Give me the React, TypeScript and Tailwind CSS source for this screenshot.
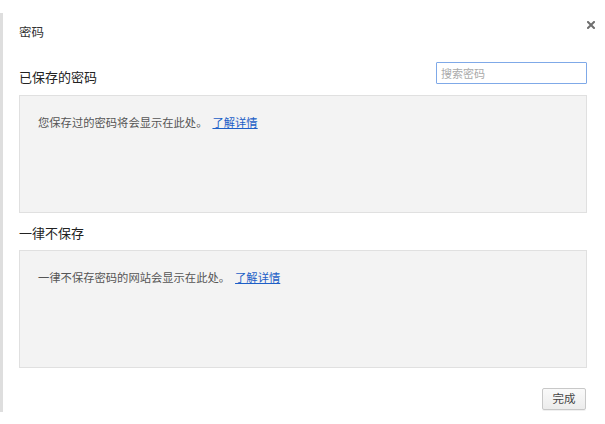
const cjk = "font-['Microsoft_YaHei','Noto_Sans_CJK_SC',sans-serif]";

function Panel({ text }: { text: string }) {
  return (
    <div className="h-[118px] border border-[#e0e0e0] bg-[#f3f3f3] px-[18px] pt-[18px]">
      <p className="text-[11.3px] leading-[16px] text-[#555]">
        {text}
        <a href="#" className="ml-[5px] text-[#1d5fc7] underline">
          了解详情
        </a>
      </p>
    </div>
  );
}

export default function App() {
  return (
    <div className={`relative flex h-[424px] w-[605px] bg-white ${cjk}`}>
      <div className="mt-[13px] h-[399px] w-[3px] bg-[#dedede]" />
      <div className="ml-[16px] mr-[18px] flex flex-1 flex-col">
        <h1 className="mt-[24px] text-[12.5px] leading-[16px] text-[#333]">密码</h1>

        <div className="mt-[22px] flex items-start justify-between">
          <h2 className="mt-[7px] text-[13px] leading-[16px] text-[#222]">已保存的密码</h2>
          <input
            placeholder="搜索密码"
            className="h-[22px] w-[151px] rounded-[1px] border border-[#7fa9e8] bg-white px-[4px] text-[11px] text-[#333] placeholder-[#aaa] outline-none"
          />
        </div>

        <div className="mt-[10px]">
          <Panel text="您保存过的密码将会显示在此处。" />
        </div>

        <h2 className="mt-[12px] text-[13px] leading-[16px] text-[#222]">一律不保存</h2>

        <div className="mt-[9px]">
          <Panel text="一律不保存密码的网站会显示在此处。" />
        </div>

        <div className="mt-[20px] flex justify-end">
          <button className="mr-[1px] h-[22px] w-[44px] rounded-[2px] border border-[#c8c8c8] bg-gradient-to-b from-[#fafafa] to-[#ececec] text-[11.5px] text-[#444] shadow-[0_1px_0_rgba(0,0,0,0.06)]">
            完成
          </button>
        </div>
      </div>

      <button className="absolute left-[587px] top-[21px]">
        <svg width="8" height="8" viewBox="0 0 8 8">
          <path d="M1 1 L7 7 M7 1 L1 7" stroke="#6f6f6f" strokeWidth="2" strokeLinecap="square" />
        </svg>
      </button>
    </div>
  );
}
